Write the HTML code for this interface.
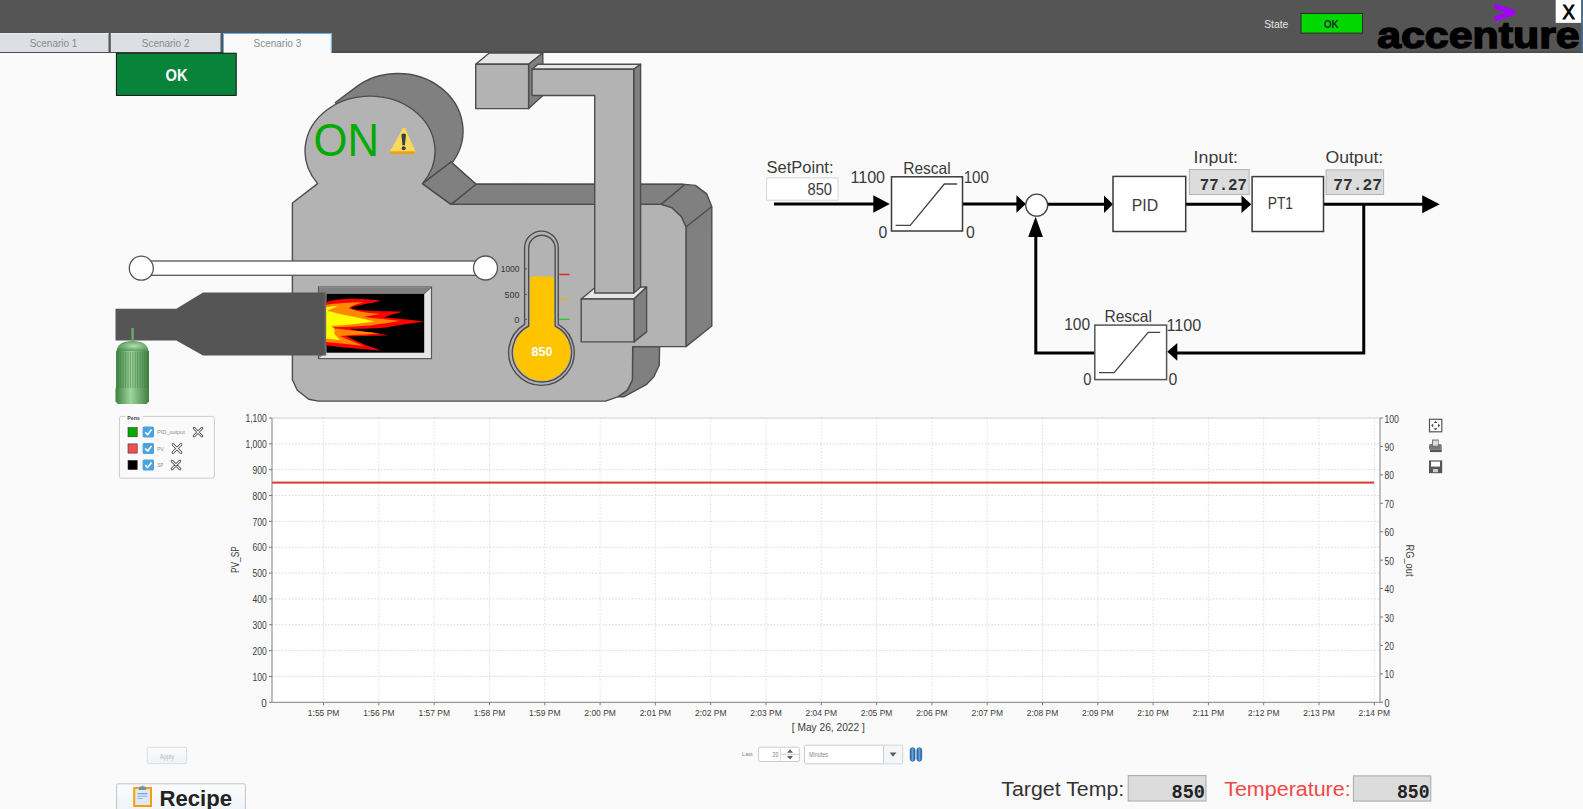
<!DOCTYPE html>
<html><head><meta charset="utf-8"><style>
html,body{margin:0;padding:0;width:1583px;height:809px;overflow:hidden;background:#fafafa;}
svg{display:block;font-family:"Liberation Sans",sans-serif;}
</style></head><body>
<svg width="1583" height="809" viewBox="0 0 1583 809">
<rect x="0" y="0" width="1583" height="809" fill="#fafafa"/>
<rect x="0" y="0" width="1583" height="52" fill="#555555"/>
<rect x="0" y="51.5" width="1583" height="1.5" fill="#4a4a4a"/>
<rect x="0" y="33" width="108.5" height="19" fill="#dcdfe3"/>
<rect x="0" y="33" width="108.5" height="1" fill="#e8eaed"/>
<rect x="110.8" y="33" width="109.7" height="19" fill="#dcdfe3"/>
<rect x="110.8" y="33" width="109.7" height="1" fill="#e8eaed"/>
<rect x="223" y="33" width="108.8" height="20.5" fill="#fafafa"/>
<path d="M223.5 53 V33.5 H331.3 V53" fill="none" stroke="#6aaee8" stroke-width="1"/>
<text x="53.5" y="46.5" font-family="Liberation Sans" font-size="11.5" fill="#8a8a8a" text-anchor="middle" font-weight="normal" textLength="47.7" lengthAdjust="spacingAndGlyphs" >Scenario 1</text>
<text x="165.6" y="46.5" font-family="Liberation Sans" font-size="11.5" fill="#8a8a8a" text-anchor="middle" font-weight="normal" textLength="47.7" lengthAdjust="spacingAndGlyphs" >Scenario 2</text>
<text x="277.4" y="46.5" font-family="Liberation Sans" font-size="11.5" fill="#8a8a8a" text-anchor="middle" font-weight="normal" textLength="47.7" lengthAdjust="spacingAndGlyphs" >Scenario 3</text>
<text x="1264.2" y="28.4" font-family="Liberation Sans" font-size="11" fill="#e6e6e6" text-anchor="start" font-weight="normal" textLength="24.2" lengthAdjust="spacingAndGlyphs" >State</text>
<rect x="1301" y="13.5" width="61.5" height="19.6" fill="#00d800" stroke="#2a2a2a" stroke-width="1"/>
<text x="1331.3" y="27.5" font-family="Liberation Sans" font-size="11" fill="#1e2e1e" text-anchor="middle" font-weight="bold" textLength="14.6" lengthAdjust="spacingAndGlyphs" >OK</text>
<text x="1377.2" y="48.2" font-family="Liberation Sans" font-size="37.5" fill="#000" text-anchor="start" font-weight="bold" textLength="202.5" lengthAdjust="spacingAndGlyphs" stroke="#000" stroke-width="1.5">accenture</text>
<path d="M1494.5 3.4 L1515.4 10.3 L1515.4 14.8 L1494.5 21.5 L1494.5 16.2 L1505.9 12.5 L1494.5 8.7 Z" fill="#a100ff"/>
<rect x="1555.7" y="0" width="25.6" height="22.9" fill="#ffffff"/>
<rect x="1581.3" y="0" width="1.7" height="52" fill="#4a6c8c"/>
<text x="1568.7" y="18.8" font-family="Liberation Sans" font-size="20" fill="#000" text-anchor="middle" font-weight="normal" textLength="12.3" lengthAdjust="spacingAndGlyphs" stroke="#000" stroke-width="0.9">X</text>
<rect x="116.4" y="53.2" width="119.8" height="42.2" fill="#07833a" stroke="#111" stroke-width="1"/>
<text x="176.5" y="81" font-family="Liberation Sans" font-size="16" fill="#ffffff" text-anchor="middle" font-weight="bold" textLength="22" lengthAdjust="spacingAndGlyphs" >OK</text>
<path d="M335.4 102.5 L355.36 87.6 A65 57.5 0 0 1 453.0 161.64 L422.5 183.6 L370 150 Z" fill="#808080" stroke="#4d4d4d" stroke-width="1.4" stroke-linejoin="round"/>
<path d="M422.5 183.6 L451 162 L476 184.2 L683 184.2 L451 204.4 Z" fill="#808080" stroke="#4d4d4d" stroke-width="1.4" stroke-linejoin="round"/>
<path d="M451 204.4 L476 184.2 L685 184.4 L695.4 185.4 L706.7 193.9 L711.8 206.5 L711.8 326 L686 346.6 L686 227 L681.4 216.8 L672.1 207.9 L661 204.4 Z" fill="#808080" stroke="#4d4d4d" stroke-width="1.4" stroke-linejoin="round"/>
<path d="M661 204.4 L685 184.4 M686 227 L711.8 206.5" fill="none" stroke="#4d4d4d" stroke-width="1.4" stroke-linejoin="round"/>
<path d="M632.7 346.6 L659.6 346.6 L659.2 365.3 L654 376.5 L646.2 384.7 L623.7 396.8 L617.7 396.8 L627.2 390.4 L632.4 380 Z" fill="#808080" stroke="#4d4d4d" stroke-width="1.4" stroke-linejoin="round"/>
<path d="M317.6 183.6 A65 55 0 1 1 422.5 183.6 L451 204.4 L661 204.4 L672.1 207.9 L681.4 216.8 L686 227 L686 346.6 L632.7 346.6 L632.4 380 L627.2 390.4 L617.7 396.8 L605.6 401.1 L318.3 401.1 L308.7 399.2 L297.3 390.3 L292.4 379.8 L292.4 203 Z" fill="#b3b3b3" stroke="#4d4d4d" stroke-width="1.4" stroke-linejoin="round"/>
<path d="M422.5 183.6 L451 162 L476 184.2 L451 204.4 Z" fill="#808080" stroke="#4d4d4d" stroke-width="1.4" stroke-linejoin="round"/>
<path d="M475.7 64.2 L489.3 53 L542.8 53 L528.6 64.2 Z" fill="#e6e6e6" stroke="#4d4d4d" stroke-width="1.4" stroke-linejoin="round"/>
<path d="M528.6 64.2 L542.8 53 L542.8 95.5 L528.6 108.6 Z" fill="#808080" stroke="#4d4d4d" stroke-width="1.4" stroke-linejoin="round"/>
<rect x="475.7" y="64.2" width="52.9" height="44.4" fill="#b3b3b3" stroke="#4d4d4d" stroke-width="1.4" stroke-linejoin="round"/>
<path d="M581.2 299 L594.2 288.2 L646.6 286.9 L634 299 Z" fill="#e6e6e6" stroke="#4d4d4d" stroke-width="1.4" stroke-linejoin="round"/>
<path d="M634 299 L646.6 286.9 L646.6 331.9 L634 341.9 Z" fill="#808080" stroke="#4d4d4d" stroke-width="1.4" stroke-linejoin="round"/>
<rect x="581.2" y="299" width="52.8" height="42.9" fill="#b3b3b3" stroke="#4d4d4d" stroke-width="1.4" stroke-linejoin="round"/>
<path d="M532 69.3 L538 64.2 L640.6 64.2 L633.7 69.3 Z" fill="#e6e6e6" stroke="#4d4d4d" stroke-width="1.4" stroke-linejoin="round"/>
<path d="M633.7 69.3 L640.6 64.2 L640.6 287.3 L633.7 293 Z" fill="#808080" stroke="#4d4d4d" stroke-width="1.4" stroke-linejoin="round"/>
<path d="M532 69.3 L633.7 69.3 L633.7 293 L594.7 293 L594.7 95.5 L532 95.5 Z" fill="#b3b3b3" stroke="#4d4d4d" stroke-width="1.4" stroke-linejoin="round"/>
<text x="313.5" y="156.2" font-family="Liberation Sans" font-size="47" fill="#00aa00" text-anchor="start" font-weight="normal" textLength="65.5" lengthAdjust="spacingAndGlyphs" >ON</text>
<path d="M402.7 128.5 Q404 127.2 405.3 128.5 L415.2 151 Q416 153.6 413.4 153.6 L392 153.6 Q389.4 153.6 390.2 151 Z" fill="#fbd85a"/>
<path d="M390.5 151.2 L415 151.2 L415.3 152.5 Q415 154.2 413 154.2 L392.3 154.2 Q390.3 154.2 390.2 152.6 Z" fill="#e8a31c"/>
<path d="M401.4 134.6 Q403.7 132.4 406 134.6 L404.9 145.3 L402.5 145.3 Z" fill="#36404a"/>
<circle cx="403.7" cy="148.3" r="2" fill="#36404a"/>
<rect x="141" y="261" width="344" height="14.3" fill="#ffffff" stroke="#555" stroke-width="1.3"/>
<circle cx="141.3" cy="268.2" r="12" fill="#ffffff" stroke="#555" stroke-width="1.3"/>
<circle cx="485.5" cy="268" r="12" fill="#ffffff" stroke="#555" stroke-width="1.3"/>
<rect x="318.5" y="287" width="113" height="71.6" fill="#e6e6e6" stroke="#5a5a5a" stroke-width="1.2"/>
<path d="M319 287.5 L431 287.5 L424.2 293.9 L326.4 293.9 L326.4 352.7 L319 358 Z" fill="#808080"/>
<rect x="326.4" y="293.9" width="97.8" height="58.8" fill="#000"/>
<path d="M424.2 293.9 L431 287.5" stroke="#5a5a5a" stroke-width="1"/>
<path d="M325 302.2 C335 299.5 345 298.5 355 298.8 C365 299 373 299.8 381.3 300.7 C372 303 358 305 350 307.5 C353 310 362 310.5 375 311 C385 311.2 395 311.5 402.5 311.7 C395 313.5 388 315.5 384 317.5 C397 318.5 411 319.5 424 321.5 C410 323.5 396 325.5 386 327.5 C372 329 355 328.5 349.4 329 C358 331 378 333.5 388.7 335.2 C375 336 355 336 346.5 336.3 C358 342 370 347 380.6 350.4 C362 349 342 347.5 325 345.2 Z" fill="#ff0000"/>
<path d="M325 305 C340 303 352 302 363.5 302.2 C356 304 350 306 349.4 308.8 C358 312 370 313 379.8 314 C374 315 367 316 363.5 317 C375 318.5 390 319.5 400 321 C390 322.5 380 324 370 325.5 C355 326.5 340 327 328 327.5 C345 330 370 332 380 333.5 C365 334.5 350 335 340 336 C348 340 357 343 363.5 345.9 C350 344.5 337 343 325 342 Z" fill="#ff8800"/>
<path d="M325 307.3 C330 306.5 335 306 339 306.2 C334 307.5 329 309.5 327.5 311 C333 312 336 313 338 313.5 C350 316 365 319 374 321.4 C360 323.5 345 325 330 326 C334 327 336 330 334 333 C336 336 338 338.5 340.5 340 C335 339.5 330 339 325 338.5 Z" fill="#ffff00"/>
<path d="M115.5 308.8 L176.3 308.8 L203 292.5 L325.5 292.5 L325.5 355.4 L203 355.4 L176.3 340.4 L115.5 340.4 Z" fill="#555555"/>
<rect x="324.6" y="292.5" width="1.6" height="62.9" fill="#6a6a6a"/>
<defs>
<linearGradient id="mg" x1="0" x2="1" y1="0" y2="0">
<stop offset="0" stop-color="#3f7f3f"/><stop offset="0.45" stop-color="#9fd49f"/><stop offset="1" stop-color="#3f7f3f"/></linearGradient>
<radialGradient id="mgd" cx="0.55" cy="0.45" r="0.6"><stop offset="0" stop-color="#b0e0b0"/><stop offset="1" stop-color="#4a8a4a"/></radialGradient>
</defs>
<rect x="131.4" y="328" width="2.4" height="14" fill="#66aa66"/>
<path d="M116.5 352 Q117 341 132.5 341 Q148 341 148.5 352 Z" fill="url(#mgd)"/>
<rect x="116" y="351" width="33" height="38" fill="url(#mg)"/>
<rect x="118.0" y="352" width="0.9" height="36" fill="#3a7a3a" opacity="0.55"/><rect x="120.4" y="352" width="0.9" height="36" fill="#3a7a3a" opacity="0.55"/><rect x="122.8" y="352" width="0.9" height="36" fill="#3a7a3a" opacity="0.55"/><rect x="125.2" y="352" width="0.9" height="36" fill="#3a7a3a" opacity="0.55"/><rect x="127.6" y="352" width="0.9" height="36" fill="#3a7a3a" opacity="0.55"/><rect x="130.0" y="352" width="0.9" height="36" fill="#3a7a3a" opacity="0.55"/><rect x="132.4" y="352" width="0.9" height="36" fill="#3a7a3a" opacity="0.55"/><rect x="134.8" y="352" width="0.9" height="36" fill="#3a7a3a" opacity="0.55"/><rect x="137.2" y="352" width="0.9" height="36" fill="#3a7a3a" opacity="0.55"/><rect x="139.6" y="352" width="0.9" height="36" fill="#3a7a3a" opacity="0.55"/><rect x="142.0" y="352" width="0.9" height="36" fill="#3a7a3a" opacity="0.55"/><rect x="144.4" y="352" width="0.9" height="36" fill="#3a7a3a" opacity="0.55"/><rect x="146.8" y="352" width="0.9" height="36" fill="#3a7a3a" opacity="0.55"/>
<path d="M115.5 388.5 L149 388.5 L149 401.5 L146.5 404 L118 404 L115.5 401.5 Z" fill="url(#mg)"/>
<path d="M524.6 324.4 L524.6 248 A16.85 16.85 0 0 1 558.3 248 L558.3 324.4 A32.8 32.8 0 1 1 524.6 324.4 Z" fill="#b3b3b3" stroke="#4d4d4d" stroke-width="1.4"/>
<path d="M528.65 326 L528.65 248.45 A13.25 13.25 0 0 1 555.15 248.45 L555.15 326 A29.6 29.6 0 1 1 528.65 326 Z" fill="#b3b3b3" stroke="#4d4d4d" stroke-width="1.4"/>
<path d="M529.95 326.5 L529.95 279.5 Q529.95 276.4 533.05 276.4 L550.95 276.4 Q554.05 276.4 554.05 279.5 L554.05 326.5 A28.35 28.35 0 1 1 529.95 326.5 Z" fill="#ffc400"/>
<text x="541.9" y="356" font-family="Liberation Sans" font-size="13" fill="#ffffff" text-anchor="middle" font-weight="bold" textLength="21" lengthAdjust="spacingAndGlyphs" >850</text>
<text x="519.5" y="272.09999999999997" font-family="Liberation Sans" font-size="9" fill="#333" text-anchor="end" font-weight="normal" textLength="18.8" lengthAdjust="spacingAndGlyphs" >1000</text>
<rect x="524" y="268.4" width="3" height="1" fill="#555"/>
<text x="519.5" y="297.59999999999997" font-family="Liberation Sans" font-size="9" fill="#333" text-anchor="end" font-weight="normal" textLength="14.9" lengthAdjust="spacingAndGlyphs" >500</text>
<rect x="524" y="293.9" width="3" height="1" fill="#555"/>
<text x="519.5" y="322.5" font-family="Liberation Sans" font-size="9" fill="#333" text-anchor="end" font-weight="normal" textLength="5.2" lengthAdjust="spacingAndGlyphs" >0</text>
<rect x="524" y="318.8" width="3" height="1" fill="#555"/>
<rect x="559.3" y="273.8" width="10.2" height="1.4" fill="#e82020"/>
<rect x="559.3" y="298.9" width="10.2" height="1.4" fill="#e8b020"/>
<rect x="559.3" y="318.7" width="10.2" height="1.4" fill="#20d020"/>
<text x="766.5" y="172.9" font-family="Liberation Sans" font-size="16" fill="#3a3a3a" text-anchor="start" font-weight="normal" textLength="67" lengthAdjust="spacingAndGlyphs" >SetPoint:</text>
<rect x="766.6" y="177.9" width="71.4" height="22.3" fill="#ffffff" stroke="#d5d5d5" stroke-width="1"/>
<text x="832" y="195.2" font-family="Liberation Sans" font-size="16" fill="#3a3a3a" text-anchor="end" font-weight="normal" textLength="24.5" lengthAdjust="spacingAndGlyphs" >850</text>
<path d="M774 204 H874 M962.5 204 H1017 M1047.6 204.2 H1105 M1185.7 204.2 H1242 M1323.5 204.2 H1423" stroke="#000" stroke-width="3" fill="none"/>
<path d="M889.8 204 L873.3 195.2 L873.3 212.8 Z" fill="#000"/>
<path d="M1025.9 204 L1016.4000000000001 195.2 L1016.4000000000001 212.8 Z" fill="#000"/>
<path d="M1113 204.2 L1104 195.5 L1104 212.89999999999998 Z" fill="#000"/>
<path d="M1251.3 204.2 L1241.5 195.5 L1241.5 212.89999999999998 Z" fill="#000"/>
<path d="M1439.7 204.2 L1422.2 195.2 L1422.2 213.2 Z" fill="#000"/>
<rect x="891.5" y="176.8" width="71" height="54.2" fill="#fff" stroke="#3a3a3a" stroke-width="1.5"/>
<path d="M895.6 225.4 H910.2 L944.3 184 H957.2" fill="none" stroke="#444" stroke-width="1.3"/>
<text x="903.2" y="174" font-family="Liberation Sans" font-size="16.5" fill="#3a3a3a" text-anchor="start" font-weight="normal" textLength="47.5" lengthAdjust="spacingAndGlyphs" >Rescal</text>
<text x="850.4" y="182.9" font-family="Liberation Sans" font-size="16" fill="#3a3a3a" text-anchor="start" font-weight="normal" textLength="34.7" lengthAdjust="spacingAndGlyphs" >1100</text>
<text x="963.7" y="182.9" font-family="Liberation Sans" font-size="16" fill="#3a3a3a" text-anchor="start" font-weight="normal" textLength="25.2" lengthAdjust="spacingAndGlyphs" >100</text>
<text x="878.6" y="238" font-family="Liberation Sans" font-size="16" fill="#3a3a3a" text-anchor="start" font-weight="normal" textLength="8.8" lengthAdjust="spacingAndGlyphs" >0</text>
<text x="966" y="237.8" font-family="Liberation Sans" font-size="16" fill="#3a3a3a" text-anchor="start" font-weight="normal" textLength="8.8" lengthAdjust="spacingAndGlyphs" >0</text>
<circle cx="1036.7" cy="205.2" r="11" fill="#fff" stroke="#444" stroke-width="1.3"/>
<path d="M1035.6 216.7 L1028.2 236.9 L1042.9 236.9 Z" fill="#000"/>
<rect x="1113" y="176.4" width="72.7" height="55.1" fill="#fff" stroke="#3a3a3a" stroke-width="1.5"/>
<text x="1131.7" y="210.9" font-family="Liberation Sans" font-size="16" fill="#3a3a3a" text-anchor="start" font-weight="normal" textLength="26.4" lengthAdjust="spacingAndGlyphs" >PID</text>
<rect x="1252.1" y="176.6" width="71.4" height="54.9" fill="#fff" stroke="#3a3a3a" stroke-width="1.5"/>
<text x="1267.7" y="209.4" font-family="Liberation Sans" font-size="16" fill="#3a3a3a" text-anchor="start" font-weight="normal" textLength="25.3" lengthAdjust="spacingAndGlyphs" >PT1</text>
<text x="1193.6" y="163" font-family="Liberation Sans" font-size="16" fill="#3a3a3a" text-anchor="start" font-weight="normal" textLength="44.4" lengthAdjust="spacingAndGlyphs" >Input:</text>
<text x="1325.5" y="163.4" font-family="Liberation Sans" font-size="16" fill="#3a3a3a" text-anchor="start" font-weight="normal" textLength="57.7" lengthAdjust="spacingAndGlyphs" >Output:</text>
<rect x="1189.4" y="169.5" width="59.8" height="25" fill="#dcdcdc" stroke="#b5b5b5" stroke-width="1"/>
<rect x="1326.1" y="169.9" width="57.5" height="24.6" fill="#dcdcdc" stroke="#b5b5b5" stroke-width="1"/>
<text x="1199.8" y="189.6" font-family="Liberation Mono" font-size="16.5" fill="#333" text-anchor="start" font-weight="bold" textLength="47.2" lengthAdjust="spacingAndGlyphs" >77.27</text>
<text x="1333.3" y="190" font-family="Liberation Mono" font-size="16.5" fill="#333" text-anchor="start" font-weight="bold" textLength="48.7" lengthAdjust="spacingAndGlyphs" >77.27</text>
<path d="M1363.75 204.2 V353.1 H1177 M1094.8 353.1 H1035.8 V236" stroke="#000" stroke-width="3" fill="none"/>
<path d="M1167.2 351.8 L1177.3 343 L1177.3 360.7 Z" fill="#000"/>
<rect x="1094.8" y="325.1" width="71.8" height="54.5" fill="#fff" stroke="#555" stroke-width="1.5"/>
<path d="M1099 372.7 H1114.1 L1148.2 332.3 H1160.2" fill="none" stroke="#444" stroke-width="1.3"/>
<text x="1104.4" y="321.5" font-family="Liberation Sans" font-size="16.5" fill="#3a3a3a" text-anchor="start" font-weight="normal" textLength="47.6" lengthAdjust="spacingAndGlyphs" >Rescal</text>
<text x="1064.2" y="330.4" font-family="Liberation Sans" font-size="16" fill="#3a3a3a" text-anchor="start" font-weight="normal" textLength="25.9" lengthAdjust="spacingAndGlyphs" >100</text>
<text x="1166.6" y="331" font-family="Liberation Sans" font-size="16" fill="#3a3a3a" text-anchor="start" font-weight="normal" textLength="34.7" lengthAdjust="spacingAndGlyphs" >1100</text>
<text x="1083.2" y="385.3" font-family="Liberation Sans" font-size="16" fill="#3a3a3a" text-anchor="start" font-weight="normal" textLength="8.2" lengthAdjust="spacingAndGlyphs" >0</text>
<text x="1168.5" y="385.3" font-family="Liberation Sans" font-size="16" fill="#3a3a3a" text-anchor="start" font-weight="normal" textLength="8.8" lengthAdjust="spacingAndGlyphs" >0</text>
<rect x="272" y="418" width="1108" height="284.29999999999995" fill="#ffffff"/>
<line x1="272" y1="676.45" x2="1380" y2="676.45" stroke="#d8d8d8" stroke-width="1" stroke-dasharray="1.6 1.7"/>
<line x1="272" y1="650.61" x2="1380" y2="650.61" stroke="#d8d8d8" stroke-width="1" stroke-dasharray="1.6 1.7"/>
<line x1="272" y1="624.76" x2="1380" y2="624.76" stroke="#d8d8d8" stroke-width="1" stroke-dasharray="1.6 1.7"/>
<line x1="272" y1="598.92" x2="1380" y2="598.92" stroke="#d8d8d8" stroke-width="1" stroke-dasharray="1.6 1.7"/>
<line x1="272" y1="573.07" x2="1380" y2="573.07" stroke="#d8d8d8" stroke-width="1" stroke-dasharray="1.6 1.7"/>
<line x1="272" y1="547.23" x2="1380" y2="547.23" stroke="#d8d8d8" stroke-width="1" stroke-dasharray="1.6 1.7"/>
<line x1="272" y1="521.38" x2="1380" y2="521.38" stroke="#d8d8d8" stroke-width="1" stroke-dasharray="1.6 1.7"/>
<line x1="272" y1="495.54" x2="1380" y2="495.54" stroke="#d8d8d8" stroke-width="1" stroke-dasharray="1.6 1.7"/>
<line x1="272" y1="469.69" x2="1380" y2="469.69" stroke="#d8d8d8" stroke-width="1" stroke-dasharray="1.6 1.7"/>
<line x1="272" y1="443.85" x2="1380" y2="443.85" stroke="#d8d8d8" stroke-width="1" stroke-dasharray="1.6 1.7"/>
<line x1="323.60" y1="418" x2="323.60" y2="702.3" stroke="#dedede" stroke-width="1" stroke-dasharray="1.6 1.7"/>
<line x1="378.90" y1="418" x2="378.90" y2="702.3" stroke="#dedede" stroke-width="1" stroke-dasharray="1.6 1.7"/>
<line x1="434.20" y1="418" x2="434.20" y2="702.3" stroke="#dedede" stroke-width="1" stroke-dasharray="1.6 1.7"/>
<line x1="489.50" y1="418" x2="489.50" y2="702.3" stroke="#dedede" stroke-width="1" stroke-dasharray="1.6 1.7"/>
<line x1="544.80" y1="418" x2="544.80" y2="702.3" stroke="#dedede" stroke-width="1" stroke-dasharray="1.6 1.7"/>
<line x1="600.10" y1="418" x2="600.10" y2="702.3" stroke="#dedede" stroke-width="1" stroke-dasharray="1.6 1.7"/>
<line x1="655.40" y1="418" x2="655.40" y2="702.3" stroke="#dedede" stroke-width="1" stroke-dasharray="1.6 1.7"/>
<line x1="710.70" y1="418" x2="710.70" y2="702.3" stroke="#dedede" stroke-width="1" stroke-dasharray="1.6 1.7"/>
<line x1="766.00" y1="418" x2="766.00" y2="702.3" stroke="#dedede" stroke-width="1" stroke-dasharray="1.6 1.7"/>
<line x1="821.30" y1="418" x2="821.30" y2="702.3" stroke="#dedede" stroke-width="1" stroke-dasharray="1.6 1.7"/>
<line x1="876.60" y1="418" x2="876.60" y2="702.3" stroke="#dedede" stroke-width="1" stroke-dasharray="1.6 1.7"/>
<line x1="931.90" y1="418" x2="931.90" y2="702.3" stroke="#dedede" stroke-width="1" stroke-dasharray="1.6 1.7"/>
<line x1="987.20" y1="418" x2="987.20" y2="702.3" stroke="#dedede" stroke-width="1" stroke-dasharray="1.6 1.7"/>
<line x1="1042.50" y1="418" x2="1042.50" y2="702.3" stroke="#dedede" stroke-width="1" stroke-dasharray="1.6 1.7"/>
<line x1="1097.80" y1="418" x2="1097.80" y2="702.3" stroke="#dedede" stroke-width="1" stroke-dasharray="1.6 1.7"/>
<line x1="1153.10" y1="418" x2="1153.10" y2="702.3" stroke="#dedede" stroke-width="1" stroke-dasharray="1.6 1.7"/>
<line x1="1208.40" y1="418" x2="1208.40" y2="702.3" stroke="#dedede" stroke-width="1" stroke-dasharray="1.6 1.7"/>
<line x1="1263.70" y1="418" x2="1263.70" y2="702.3" stroke="#dedede" stroke-width="1" stroke-dasharray="1.6 1.7"/>
<line x1="1319.00" y1="418" x2="1319.00" y2="702.3" stroke="#dedede" stroke-width="1" stroke-dasharray="1.6 1.7"/>
<line x1="1374.30" y1="418" x2="1374.30" y2="702.3" stroke="#dedede" stroke-width="1" stroke-dasharray="1.6 1.7"/>
<line x1="272" y1="418" x2="1380" y2="418" stroke="#cfcfcf" stroke-width="1"/>
<rect x="272" y="481.6" width="1102" height="2" fill="#d63a30"/>
<line x1="272" y1="418" x2="272" y2="702.3" stroke="#808080" stroke-width="1"/>
<line x1="1380" y1="418" x2="1380" y2="702.3" stroke="#808080" stroke-width="1"/>
<line x1="272" y1="702.3" x2="1380" y2="702.3" stroke="#808080" stroke-width="1"/>
<line x1="269" y1="702.30" x2="272" y2="702.30" stroke="#7a7a7a" stroke-width="1"/>
<text x="266.8" y="706.50" font-family="Liberation Sans" font-size="10" fill="#3c3c3c" text-anchor="end" font-weight="normal" textLength="5.5" lengthAdjust="spacingAndGlyphs" >0</text>
<line x1="269" y1="676.45" x2="272" y2="676.45" stroke="#7a7a7a" stroke-width="1"/>
<text x="266.8" y="680.65" font-family="Liberation Sans" font-size="10" fill="#3c3c3c" text-anchor="end" font-weight="normal" textLength="14.3" lengthAdjust="spacingAndGlyphs" >100</text>
<line x1="269" y1="650.61" x2="272" y2="650.61" stroke="#7a7a7a" stroke-width="1"/>
<text x="266.8" y="654.81" font-family="Liberation Sans" font-size="10" fill="#3c3c3c" text-anchor="end" font-weight="normal" textLength="14.3" lengthAdjust="spacingAndGlyphs" >200</text>
<line x1="269" y1="624.76" x2="272" y2="624.76" stroke="#7a7a7a" stroke-width="1"/>
<text x="266.8" y="628.96" font-family="Liberation Sans" font-size="10" fill="#3c3c3c" text-anchor="end" font-weight="normal" textLength="14.3" lengthAdjust="spacingAndGlyphs" >300</text>
<line x1="269" y1="598.92" x2="272" y2="598.92" stroke="#7a7a7a" stroke-width="1"/>
<text x="266.8" y="603.12" font-family="Liberation Sans" font-size="10" fill="#3c3c3c" text-anchor="end" font-weight="normal" textLength="14.3" lengthAdjust="spacingAndGlyphs" >400</text>
<line x1="269" y1="573.07" x2="272" y2="573.07" stroke="#7a7a7a" stroke-width="1"/>
<text x="266.8" y="577.27" font-family="Liberation Sans" font-size="10" fill="#3c3c3c" text-anchor="end" font-weight="normal" textLength="14.3" lengthAdjust="spacingAndGlyphs" >500</text>
<line x1="269" y1="547.23" x2="272" y2="547.23" stroke="#7a7a7a" stroke-width="1"/>
<text x="266.8" y="551.43" font-family="Liberation Sans" font-size="10" fill="#3c3c3c" text-anchor="end" font-weight="normal" textLength="14.3" lengthAdjust="spacingAndGlyphs" >600</text>
<line x1="269" y1="521.38" x2="272" y2="521.38" stroke="#7a7a7a" stroke-width="1"/>
<text x="266.8" y="525.58" font-family="Liberation Sans" font-size="10" fill="#3c3c3c" text-anchor="end" font-weight="normal" textLength="14.3" lengthAdjust="spacingAndGlyphs" >700</text>
<line x1="269" y1="495.54" x2="272" y2="495.54" stroke="#7a7a7a" stroke-width="1"/>
<text x="266.8" y="499.74" font-family="Liberation Sans" font-size="10" fill="#3c3c3c" text-anchor="end" font-weight="normal" textLength="14.3" lengthAdjust="spacingAndGlyphs" >800</text>
<line x1="269" y1="469.69" x2="272" y2="469.69" stroke="#7a7a7a" stroke-width="1"/>
<text x="266.8" y="473.89" font-family="Liberation Sans" font-size="10" fill="#3c3c3c" text-anchor="end" font-weight="normal" textLength="14.3" lengthAdjust="spacingAndGlyphs" >900</text>
<line x1="269" y1="443.85" x2="272" y2="443.85" stroke="#7a7a7a" stroke-width="1"/>
<text x="266.8" y="448.05" font-family="Liberation Sans" font-size="10" fill="#3c3c3c" text-anchor="end" font-weight="normal" textLength="21.4" lengthAdjust="spacingAndGlyphs" >1,000</text>
<line x1="269" y1="418.00" x2="272" y2="418.00" stroke="#7a7a7a" stroke-width="1"/>
<text x="266.8" y="422.20" font-family="Liberation Sans" font-size="10" fill="#3c3c3c" text-anchor="end" font-weight="normal" textLength="21.4" lengthAdjust="spacingAndGlyphs" >1,100</text>
<line x1="1380" y1="702.30" x2="1383" y2="702.30" stroke="#7a7a7a" stroke-width="1"/>
<text x="1384.5" y="706.90" font-family="Liberation Sans" font-size="10" fill="#3c3c3c" text-anchor="start" font-weight="normal" textLength="5" lengthAdjust="spacingAndGlyphs" >0</text>
<line x1="1380" y1="673.87" x2="1383" y2="673.87" stroke="#7a7a7a" stroke-width="1"/>
<text x="1384.5" y="678.47" font-family="Liberation Sans" font-size="10" fill="#3c3c3c" text-anchor="start" font-weight="normal" textLength="9.4" lengthAdjust="spacingAndGlyphs" >10</text>
<line x1="1380" y1="645.44" x2="1383" y2="645.44" stroke="#7a7a7a" stroke-width="1"/>
<text x="1384.5" y="650.04" font-family="Liberation Sans" font-size="10" fill="#3c3c3c" text-anchor="start" font-weight="normal" textLength="9.4" lengthAdjust="spacingAndGlyphs" >20</text>
<line x1="1380" y1="617.01" x2="1383" y2="617.01" stroke="#7a7a7a" stroke-width="1"/>
<text x="1384.5" y="621.61" font-family="Liberation Sans" font-size="10" fill="#3c3c3c" text-anchor="start" font-weight="normal" textLength="9.4" lengthAdjust="spacingAndGlyphs" >30</text>
<line x1="1380" y1="588.58" x2="1383" y2="588.58" stroke="#7a7a7a" stroke-width="1"/>
<text x="1384.5" y="593.18" font-family="Liberation Sans" font-size="10" fill="#3c3c3c" text-anchor="start" font-weight="normal" textLength="9.4" lengthAdjust="spacingAndGlyphs" >40</text>
<line x1="1380" y1="560.15" x2="1383" y2="560.15" stroke="#7a7a7a" stroke-width="1"/>
<text x="1384.5" y="564.75" font-family="Liberation Sans" font-size="10" fill="#3c3c3c" text-anchor="start" font-weight="normal" textLength="9.4" lengthAdjust="spacingAndGlyphs" >50</text>
<line x1="1380" y1="531.72" x2="1383" y2="531.72" stroke="#7a7a7a" stroke-width="1"/>
<text x="1384.5" y="536.32" font-family="Liberation Sans" font-size="10" fill="#3c3c3c" text-anchor="start" font-weight="normal" textLength="9.4" lengthAdjust="spacingAndGlyphs" >60</text>
<line x1="1380" y1="503.29" x2="1383" y2="503.29" stroke="#7a7a7a" stroke-width="1"/>
<text x="1384.5" y="507.89" font-family="Liberation Sans" font-size="10" fill="#3c3c3c" text-anchor="start" font-weight="normal" textLength="9.4" lengthAdjust="spacingAndGlyphs" >70</text>
<line x1="1380" y1="474.86" x2="1383" y2="474.86" stroke="#7a7a7a" stroke-width="1"/>
<text x="1384.5" y="479.46" font-family="Liberation Sans" font-size="10" fill="#3c3c3c" text-anchor="start" font-weight="normal" textLength="9.4" lengthAdjust="spacingAndGlyphs" >80</text>
<line x1="1380" y1="446.43" x2="1383" y2="446.43" stroke="#7a7a7a" stroke-width="1"/>
<text x="1384.5" y="451.03" font-family="Liberation Sans" font-size="10" fill="#3c3c3c" text-anchor="start" font-weight="normal" textLength="9.4" lengthAdjust="spacingAndGlyphs" >90</text>
<line x1="1380" y1="418.00" x2="1383" y2="418.00" stroke="#7a7a7a" stroke-width="1"/>
<text x="1384.5" y="422.60" font-family="Liberation Sans" font-size="10" fill="#3c3c3c" text-anchor="start" font-weight="normal" textLength="14.4" lengthAdjust="spacingAndGlyphs" >100</text>
<line x1="323.60" y1="702.3" x2="323.60" y2="705.3" stroke="#7a7a7a" stroke-width="1"/>
<text x="323.60" y="715.8" font-family="Liberation Sans" font-size="9.5" fill="#3c3c3c" text-anchor="middle" font-weight="normal" textLength="31.5" lengthAdjust="spacingAndGlyphs" >1:55 PM</text>
<line x1="378.90" y1="702.3" x2="378.90" y2="705.3" stroke="#7a7a7a" stroke-width="1"/>
<text x="378.90" y="715.8" font-family="Liberation Sans" font-size="9.5" fill="#3c3c3c" text-anchor="middle" font-weight="normal" textLength="31.5" lengthAdjust="spacingAndGlyphs" >1:56 PM</text>
<line x1="434.20" y1="702.3" x2="434.20" y2="705.3" stroke="#7a7a7a" stroke-width="1"/>
<text x="434.20" y="715.8" font-family="Liberation Sans" font-size="9.5" fill="#3c3c3c" text-anchor="middle" font-weight="normal" textLength="31.5" lengthAdjust="spacingAndGlyphs" >1:57 PM</text>
<line x1="489.50" y1="702.3" x2="489.50" y2="705.3" stroke="#7a7a7a" stroke-width="1"/>
<text x="489.50" y="715.8" font-family="Liberation Sans" font-size="9.5" fill="#3c3c3c" text-anchor="middle" font-weight="normal" textLength="31.5" lengthAdjust="spacingAndGlyphs" >1:58 PM</text>
<line x1="544.80" y1="702.3" x2="544.80" y2="705.3" stroke="#7a7a7a" stroke-width="1"/>
<text x="544.80" y="715.8" font-family="Liberation Sans" font-size="9.5" fill="#3c3c3c" text-anchor="middle" font-weight="normal" textLength="31.5" lengthAdjust="spacingAndGlyphs" >1:59 PM</text>
<line x1="600.10" y1="702.3" x2="600.10" y2="705.3" stroke="#7a7a7a" stroke-width="1"/>
<text x="600.10" y="715.8" font-family="Liberation Sans" font-size="9.5" fill="#3c3c3c" text-anchor="middle" font-weight="normal" textLength="31.5" lengthAdjust="spacingAndGlyphs" >2:00 PM</text>
<line x1="655.40" y1="702.3" x2="655.40" y2="705.3" stroke="#7a7a7a" stroke-width="1"/>
<text x="655.40" y="715.8" font-family="Liberation Sans" font-size="9.5" fill="#3c3c3c" text-anchor="middle" font-weight="normal" textLength="31.5" lengthAdjust="spacingAndGlyphs" >2:01 PM</text>
<line x1="710.70" y1="702.3" x2="710.70" y2="705.3" stroke="#7a7a7a" stroke-width="1"/>
<text x="710.70" y="715.8" font-family="Liberation Sans" font-size="9.5" fill="#3c3c3c" text-anchor="middle" font-weight="normal" textLength="31.5" lengthAdjust="spacingAndGlyphs" >2:02 PM</text>
<line x1="766.00" y1="702.3" x2="766.00" y2="705.3" stroke="#7a7a7a" stroke-width="1"/>
<text x="766.00" y="715.8" font-family="Liberation Sans" font-size="9.5" fill="#3c3c3c" text-anchor="middle" font-weight="normal" textLength="31.5" lengthAdjust="spacingAndGlyphs" >2:03 PM</text>
<line x1="821.30" y1="702.3" x2="821.30" y2="705.3" stroke="#7a7a7a" stroke-width="1"/>
<text x="821.30" y="715.8" font-family="Liberation Sans" font-size="9.5" fill="#3c3c3c" text-anchor="middle" font-weight="normal" textLength="31.5" lengthAdjust="spacingAndGlyphs" >2:04 PM</text>
<line x1="876.60" y1="702.3" x2="876.60" y2="705.3" stroke="#7a7a7a" stroke-width="1"/>
<text x="876.60" y="715.8" font-family="Liberation Sans" font-size="9.5" fill="#3c3c3c" text-anchor="middle" font-weight="normal" textLength="31.5" lengthAdjust="spacingAndGlyphs" >2:05 PM</text>
<line x1="931.90" y1="702.3" x2="931.90" y2="705.3" stroke="#7a7a7a" stroke-width="1"/>
<text x="931.90" y="715.8" font-family="Liberation Sans" font-size="9.5" fill="#3c3c3c" text-anchor="middle" font-weight="normal" textLength="31.5" lengthAdjust="spacingAndGlyphs" >2:06 PM</text>
<line x1="987.20" y1="702.3" x2="987.20" y2="705.3" stroke="#7a7a7a" stroke-width="1"/>
<text x="987.20" y="715.8" font-family="Liberation Sans" font-size="9.5" fill="#3c3c3c" text-anchor="middle" font-weight="normal" textLength="31.5" lengthAdjust="spacingAndGlyphs" >2:07 PM</text>
<line x1="1042.50" y1="702.3" x2="1042.50" y2="705.3" stroke="#7a7a7a" stroke-width="1"/>
<text x="1042.50" y="715.8" font-family="Liberation Sans" font-size="9.5" fill="#3c3c3c" text-anchor="middle" font-weight="normal" textLength="31.5" lengthAdjust="spacingAndGlyphs" >2:08 PM</text>
<line x1="1097.80" y1="702.3" x2="1097.80" y2="705.3" stroke="#7a7a7a" stroke-width="1"/>
<text x="1097.80" y="715.8" font-family="Liberation Sans" font-size="9.5" fill="#3c3c3c" text-anchor="middle" font-weight="normal" textLength="31.5" lengthAdjust="spacingAndGlyphs" >2:09 PM</text>
<line x1="1153.10" y1="702.3" x2="1153.10" y2="705.3" stroke="#7a7a7a" stroke-width="1"/>
<text x="1153.10" y="715.8" font-family="Liberation Sans" font-size="9.5" fill="#3c3c3c" text-anchor="middle" font-weight="normal" textLength="31.5" lengthAdjust="spacingAndGlyphs" >2:10 PM</text>
<line x1="1208.40" y1="702.3" x2="1208.40" y2="705.3" stroke="#7a7a7a" stroke-width="1"/>
<text x="1208.40" y="715.8" font-family="Liberation Sans" font-size="9.5" fill="#3c3c3c" text-anchor="middle" font-weight="normal" textLength="31.5" lengthAdjust="spacingAndGlyphs" >2:11 PM</text>
<line x1="1263.70" y1="702.3" x2="1263.70" y2="705.3" stroke="#7a7a7a" stroke-width="1"/>
<text x="1263.70" y="715.8" font-family="Liberation Sans" font-size="9.5" fill="#3c3c3c" text-anchor="middle" font-weight="normal" textLength="31.5" lengthAdjust="spacingAndGlyphs" >2:12 PM</text>
<line x1="1319.00" y1="702.3" x2="1319.00" y2="705.3" stroke="#7a7a7a" stroke-width="1"/>
<text x="1319.00" y="715.8" font-family="Liberation Sans" font-size="9.5" fill="#3c3c3c" text-anchor="middle" font-weight="normal" textLength="31.5" lengthAdjust="spacingAndGlyphs" >2:13 PM</text>
<line x1="1374.30" y1="702.3" x2="1374.30" y2="705.3" stroke="#7a7a7a" stroke-width="1"/>
<text x="1374.30" y="715.8" font-family="Liberation Sans" font-size="9.5" fill="#3c3c3c" text-anchor="middle" font-weight="normal" textLength="31.5" lengthAdjust="spacingAndGlyphs" >2:14 PM</text>
<text x="828.3" y="731.4" font-family="Liberation Sans" font-size="11" fill="#3c3c3c" text-anchor="middle" font-weight="normal" textLength="73" lengthAdjust="spacingAndGlyphs" >[ May 26, 2022 ]</text>
<text x="0" y="0" font-family="Liberation Sans" font-size="10" fill="#3c3c3c" text-anchor="middle" font-weight="normal" textLength="26.7" lengthAdjust="spacingAndGlyphs" transform="translate(238.8 559.6) rotate(-90)">PV_SP</text>
<text x="0" y="0" font-family="Liberation Sans" font-size="10" fill="#3c3c3c" text-anchor="middle" font-weight="normal" textLength="32" lengthAdjust="spacingAndGlyphs" transform="translate(1405.8 560.5) rotate(90)">RG_out</text>
<rect x="119.4" y="416.4" width="95" height="61.8" rx="2" fill="none" stroke="#c9cdd2" stroke-width="1"/>
<rect x="125" y="413" width="18" height="8" fill="#fafafa"/>
<text x="127.3" y="420" font-family="Liberation Sans" font-size="6" fill="#444" text-anchor="start" font-weight="bold" textLength="12.4" lengthAdjust="spacingAndGlyphs" >Pens</text>
<rect x="128" y="427.59999999999997" width="9.2" height="9.2" fill="#00aa00" stroke="#333" stroke-width="0.6"/>
<rect x="142.6" y="426.59999999999997" width="11.4" height="11" rx="1.5" fill="#4aa3df"/>
<path d="M145.2 432.2 L147.6 434.8 L151.6 429.6" fill="none" stroke="#fff" stroke-width="1.6"/>
<text x="157.3" y="434.4" font-family="Liberation Sans" font-size="6" fill="#8a8a8a" text-anchor="start" font-weight="normal" textLength="27.4" lengthAdjust="spacingAndGlyphs" >PID_output</text>
<path d="M194 428.2 L202 436.2 M202 428.2 L194 436.2" fill="none" stroke="#333" stroke-width="2.6" stroke-linecap="round"/>
<path d="M194 428.2 L202 436.2 M202 428.2 L194 436.2" fill="none" stroke="#fff" stroke-width="1.2" stroke-linecap="round"/>
<rect x="128" y="443.9" width="9.2" height="9.2" fill="#f05050" stroke="#333" stroke-width="0.6"/>
<rect x="142.6" y="442.9" width="11.4" height="11" rx="1.5" fill="#4aa3df"/>
<path d="M145.2 448.5 L147.6 451.1 L151.6 445.9" fill="none" stroke="#fff" stroke-width="1.6"/>
<text x="157.3" y="450.7" font-family="Liberation Sans" font-size="6" fill="#8a8a8a" text-anchor="start" font-weight="normal" textLength="6.5" lengthAdjust="spacingAndGlyphs" >PV</text>
<path d="M173 444.5 L181 452.5 M181 444.5 L173 452.5" fill="none" stroke="#333" stroke-width="2.6" stroke-linecap="round"/>
<path d="M173 444.5 L181 452.5 M181 444.5 L173 452.5" fill="none" stroke="#fff" stroke-width="1.2" stroke-linecap="round"/>
<rect x="128" y="460.4" width="9.2" height="9.2" fill="#000000" stroke="#333" stroke-width="0.6"/>
<rect x="142.6" y="459.4" width="11.4" height="11" rx="1.5" fill="#4aa3df"/>
<path d="M145.2 465.0 L147.6 467.6 L151.6 462.4" fill="none" stroke="#fff" stroke-width="1.6"/>
<text x="157.3" y="467.2" font-family="Liberation Sans" font-size="6" fill="#8a8a8a" text-anchor="start" font-weight="normal" textLength="6" lengthAdjust="spacingAndGlyphs" >SP</text>
<path d="M172 461 L180 469 M180 461 L172 469" fill="none" stroke="#333" stroke-width="2.6" stroke-linecap="round"/>
<path d="M172 461 L180 469 M180 461 L172 469" fill="none" stroke="#fff" stroke-width="1.2" stroke-linecap="round"/>
<rect x="1429.5" y="419.3" width="12.3" height="12.5" fill="#fff" stroke="#555" stroke-width="1.2"/>
<path d="M1435.6 421 l-2 2 h4 z M1435.6 430.2 l-2 -2 h4 z M1431.2 425.5 l2 -2 v4 z M1440.1 425.5 l-2 -2 v4 z" fill="#444"/>
<path d="M1432 444 h-1.5 a1.5 1.5 0 0 0 -1.5 1.5 v4 h12.7 v-4 a1.5 1.5 0 0 0 -1.5 -1.5 h-1.5 v-4.4 h-6.7 z" fill="#777"/>
<rect x="1433" y="440.6" width="5" height="5" fill="#ddd"/>
<rect x="1430" y="449.5" width="11.7" height="2.6" fill="#555"/>
<path d="M1429 460.4 h13.2 v12.8 h-13.2 z" fill="#555"/>
<rect x="1431" y="461.6" width="9" height="5" fill="#fff"/>
<rect x="1433" y="469" width="5" height="3.2" fill="#ccc"/>
<defs><linearGradient id="btn" x1="0" x2="0" y1="0" y2="1"><stop offset="0" stop-color="#fbfcfd"/><stop offset="1" stop-color="#eef2f6"/></linearGradient></defs>
<rect x="147.2" y="747.3" width="39.4" height="16.4" rx="1.5" fill="url(#btn)" stroke="#d8dde2" stroke-width="1"/>
<text x="166.9" y="758.5" font-family="Liberation Sans" font-size="6.5" fill="#b8bcc4" text-anchor="middle" font-weight="normal" textLength="14.5" lengthAdjust="spacingAndGlyphs" >Apply</text>
<text x="742" y="756.3" font-family="Liberation Sans" font-size="6" fill="#888" text-anchor="start" font-weight="normal" textLength="10.7" lengthAdjust="spacingAndGlyphs" >Last</text>
<rect x="758.6" y="747.2" width="40.8" height="14.3" rx="1.5" fill="#fff" stroke="#c9cdd2" stroke-width="1"/>
<line x1="780.5" y1="747.5" x2="780.5" y2="761.3" stroke="#dde0e4" stroke-width="1"/>
<line x1="781" y1="754.3" x2="799" y2="754.3" stroke="#c9cdd2" stroke-width="1"/>
<path d="M787 752.8 L790 749.3 L793 752.8 Z M787 756 L790 759.5 L793 756 Z" fill="#52606e"/>
<text x="778.3" y="756.5" font-family="Liberation Sans" font-size="6.5" fill="#777" text-anchor="end" font-weight="normal" textLength="5.8" lengthAdjust="spacingAndGlyphs" >20</text>
<rect x="804.5" y="745.2" width="98.2" height="18.6" rx="1.5" fill="#fff" stroke="#c9cdd2" stroke-width="1"/>
<rect x="883.5" y="745.7" width="18.7" height="17.6" fill="#f3f5f7"/>
<line x1="883.5" y1="745.5" x2="883.5" y2="763.5" stroke="#c9cdd2" stroke-width="1"/>
<path d="M889.6 752.4 L896.4 752.4 L893 756.8 Z" fill="#52606e"/>
<text x="809" y="756.6" font-family="Liberation Sans" font-size="6.5" fill="#888" text-anchor="start" font-weight="normal" textLength="19" lengthAdjust="spacingAndGlyphs" >Minutes</text>
<defs><linearGradient id="pb" x1="0" x2="1"><stop offset="0" stop-color="#1e5aa0"/><stop offset="0.5" stop-color="#5fa8e8"/><stop offset="1" stop-color="#1e5aa0"/></linearGradient></defs>
<rect x="910.2" y="747.7" width="4.8" height="13.6" rx="2.4" fill="url(#pb)" stroke="#184a80" stroke-width="0.6"/>
<rect x="916.9" y="747.7" width="4.8" height="13.6" rx="2.4" fill="url(#pb)" stroke="#184a80" stroke-width="0.6"/>
<rect x="116.6" y="783.8" width="128.8" height="30" rx="1.5" fill="url(#btn)" stroke="#c0c4c8" stroke-width="1"/>
<rect x="134.2" y="788" width="16.8" height="18" fill="#dde9f7" stroke="#f5a000" stroke-width="2"/>
<path d="M138.6 790 L139.4 786.5 L141.3 786.5 Q142.5 784.3 143.7 786.5 L145.6 786.5 L146.4 790 Z" fill="#7f8f9c"/>
<rect x="137.5" y="793.2" width="10" height="1" fill="#5b8fd0"/>
<rect x="137.5" y="795.7" width="10" height="1" fill="#8fb3e0"/>
<rect x="137.5" y="797.9" width="5" height="1" fill="#8fb3e0"/>
<text x="159.5" y="805.6" font-family="Liberation Sans" font-size="22.5" fill="#222" text-anchor="start" font-weight="bold" textLength="72.5" lengthAdjust="spacingAndGlyphs" >Recipe</text>
<text x="1001.3" y="796.3" font-family="Liberation Sans" font-size="20" fill="#333" text-anchor="start" font-weight="normal" textLength="123" lengthAdjust="spacingAndGlyphs" >Target Temp:</text>
<rect x="1128.2" y="775.6" width="77.8" height="25.4" fill="#dcdcdc" stroke="#a9a9a9" stroke-width="1"/>
<text x="1204.9" y="797.7" font-family="Liberation Mono" font-size="20.5" fill="#222" text-anchor="end" font-weight="bold" textLength="33.4" lengthAdjust="spacingAndGlyphs" >850</text>
<text x="1224.2" y="796.3" font-family="Liberation Sans" font-size="20" fill="#f04848" text-anchor="start" font-weight="normal" textLength="126.5" lengthAdjust="spacingAndGlyphs" >Temperature:</text>
<rect x="1353.4" y="775.9" width="77.4" height="25.2" fill="#dcdcdc" stroke="#a9a9a9" stroke-width="1"/>
<text x="1429.6" y="797.7" font-family="Liberation Mono" font-size="20.5" fill="#222" text-anchor="end" font-weight="bold" textLength="32.6" lengthAdjust="spacingAndGlyphs" >850</text>
</svg>
</body></html>
